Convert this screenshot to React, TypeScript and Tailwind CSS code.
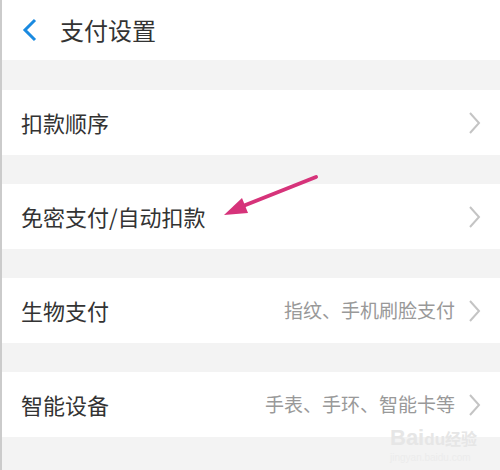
import React from "react";

const Chevron = () => (
  <svg width="14" height="24" viewBox="0 0 14 24" className="shrink-0">
    <path d="M3 2 L12 12 L3 22" fill="none" stroke="#c4c4c4" strokeWidth="2" />
  </svg>
);

const Row = ({ label, value }: { label: string; value?: string }) => (
  <div className="flex h-[65px] items-center bg-white pl-[19px] pr-[19px]">
    <span className="flex-1 text-[22px] text-[#333]">{label}</span>
    {value && <span className="mr-[12px] text-[19px] text-[#999]">{value}</span>}
    <Chevron />
  </div>
);

export default function App() {
  return (
    <div
      className="relative h-[470px] w-[500px] overflow-hidden bg-[#f3f3f3] border-l-2 border-[#cbcbcb]"
      style={{ fontFamily: '"Noto Sans CJK SC", "Noto Sans", sans-serif' }}
    >
      <div className="flex h-[60px] items-center bg-white">
        <svg width="20" height="24" viewBox="0 0 20 24" className="ml-[18px]">
          <path d="M15 2 L5 12 L15 22" fill="none" stroke="#1a8ae0" strokeWidth="3" />
        </svg>
        <span className="ml-[20px] text-[24px] text-[#333]">支付设置</span>
      </div>
      <div className="mt-[30px] flex flex-col gap-[29px]">
        <Row label="扣款顺序" />
        <Row label="免密支付/自动扣款" />
        <Row label="生物支付" value="指纹、手机刷脸支付" />
        <Row label="智能设备" value="手表、手环、智能卡等" />
      </div>
      <svg className="absolute left-0 top-0" width="500" height="470" viewBox="0 0 500 470">
        <line x1="314" y1="177" x2="236" y2="208" stroke="#d6337a" strokeWidth="4" strokeLinecap="round" />
        <polygon points="222,215 240,198 246,213" fill="#d6337a" />
      </svg>
      <div className="absolute left-[388px] top-[426px] flex flex-col items-start">
        <div className="text-[22px] leading-[24px] font-bold text-[#e6e6e6]" style={{ fontFamily: '"Liberation Sans", sans-serif' }}>
          Bai<span className="text-[17px]">du</span><span className="text-[16px]" style={{ fontFamily: '"Noto Sans CJK SC", sans-serif' }}>经验</span>
        </div>
        <div className="text-[10px] leading-[12px] text-[#ececec]" style={{ fontFamily: '"Liberation Sans", sans-serif' }}>
          jingyan.baidu.com
        </div>
      </div>
    </div>
  );
}
